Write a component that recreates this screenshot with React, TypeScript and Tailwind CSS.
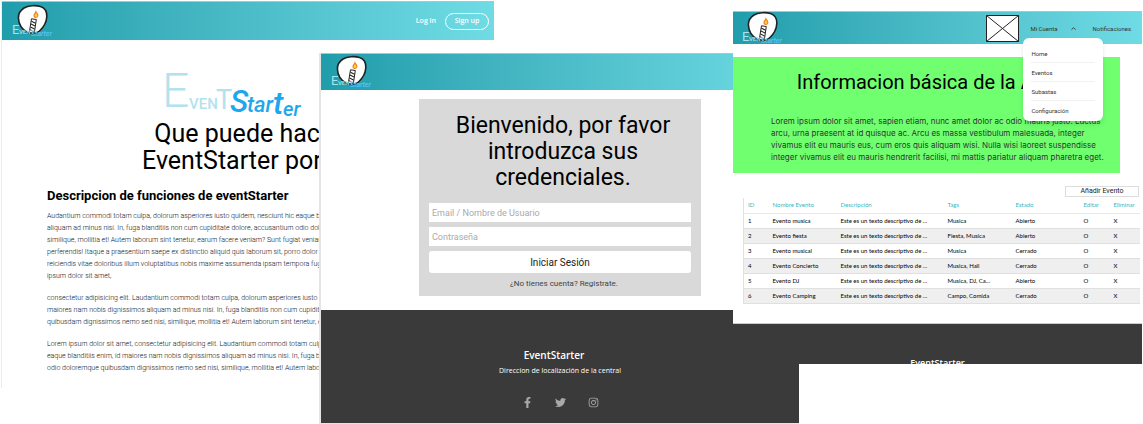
import { FaFacebookF, FaInstagram, FaTwitter } from "react-icons/fa";
import { LuChevronUp } from "react-icons/lu";

const BAR = "border-t border-[#8fd3da] bg-linear-to-r from-[#1f9dab] to-[#6fdce5]";

function Wordmark({ className, light, strong }: { className: string; light: string; strong: string }) {
  return (
    <svg viewBox="0 0 146 54" className={className} role="img" aria-label="EventStarter" fontFamily="Roboto, sans-serif">
      <g fill={light}>
        <text x="1" y="41" fontSize="48" fontWeight="300">E</text>
        <text x="28" y="43" fontSize="15" fontWeight="500">VEN</text>
        <text x="55" y="43" fontSize="27" fontWeight="400">T</text>
      </g>
      <g fill={strong} fontStyle="italic" fontWeight="500">
        <text x="69" y="46" fontSize="31">S</text>
        <text x="86" y="46" fontSize="22">tar</text>
        <text x="112" y="48" fontSize="32">t</text>
        <text x="122" y="50" fontSize="20">er</text>
      </g>
    </svg>
  );
}

function Logo() {
  return (
    <svg viewBox="0 0 42 36" className="h-9 w-[42px] shrink-0" role="img" aria-label="EventStarter">
      <path
        d="M12 5C16 2.300 24 2 28.500 3.500c4.500 1.500 6.500 5.500 6.300 10-.2 6-3.500 11-7.300 14.500-3 2.800-8.500 3.200-12.500 1-4.800-2.600-8.300-8-8.600-14C6.200 11 8.500 7.300 12 5z"
        fill="#fff"
        stroke="#1d2326"
        strokeWidth="1.600"
      />
      <path d="M19.500 15.800l4.800.7-2 13.500-5-.7z" fill="#fff" stroke="#222" strokeWidth="1" />
      <path d="M19.500 18.200l4 2M19 21l4 2M18.500 24l4 2M18 26.800l4 2" stroke="#222" strokeWidth="1.100" />
      <path d="M23.800 7.300c.4 2 2.700 3 2.600 5.200-.1 1.600-1.200 2.500-2.600 2.500-1.600 0-2.500-1.200-2.300-2.800.2-1.700 2-2.500 2.300-4.900z" fill="#f47a1e" />
      <path d="M24 9.800c.3 1 1.600 1.800 1.300 3.200-.3 1.200-2.700 1.200-2.700-.2 0-1.100 1.200-1.800 1.400-3z" fill="#ffd43b" />
      <g fontFamily="Roboto, sans-serif">
        <text x="0" y="31" fontSize="13" fill="#a5e3ee">E</text>
        <text x="7" y="31" fontSize="6" fontWeight="500" fill="#a5e3ee">VENT</text>
        <text x="19" y="33" fontSize="7" fontStyle="italic" fontWeight="500" fill="#5cc4fa">Starter</text>
      </g>
    </svg>
  );
}

const paragraphs: string[][] = [
  [
    "Audantium commodi totam culpa, dolorum asperiores iusto quidem, nesciunt hic eaque blanditiis enim,",
    "aliquam ad minus nisi. In, fuga blanditiis non cum cupiditate dolore, accusantium odio doloremque",
    "similique, mollitia et! Autem laborum sint tenetur, earum facere veniam? Sunt fugiat veniam",
    "perferendis! Itaque a praesentium saepe ex distinctio aliquid quis laborum sit, porro dolor odio",
    "reiciendis vitae doloribus illum voluptatibus nobis maxime assumenda ipsam tempora fugiat",
    "ipsum dolor sit amet,",
  ],
  [
    "consectetur adipisicing elit. Laudantium commodi totam culpa, dolorum asperiores iusto quidem,",
    "maiores nam nobis dignissimos aliquam ad minus nisi. In, fuga blanditiis non cum cupiditate",
    "quibusdam dignissimos nemo sed nisi, similique, mollitia et! Autem laborum sint tenetur, earum",
  ],
  [
    "Lorem ipsum dolor sit amet, consectetur adipisicing elit. Laudantium commodi totam culpa,",
    "eaque blanditiis enim, id maiores nam nobis dignissimos aliquam ad minus nisi. In, fuga blanditiis",
    "odio doloremque quibusdam dignissimos nemo sed nisi, similique, mollitia et! Autem laborum",
  ],
];

function AboutScreen() {
  return (
    <section className="col-start-1 col-end-3 row-start-1 mt-px min-w-0 self-start overflow-hidden border-l border-[#ececec] bg-white pb-[14px]">
      <header className={`${BAR} flex h-[39px] items-center pl-[10px] pr-[5px]`}>
        <Logo />
        <nav className="ml-auto flex items-center gap-[9px] font-['Open_Sans',sans-serif] text-[7px] font-semibold text-white">
          <a href="#login">Log in</a>
          <a href="#signup" className="flex h-[17px] w-11 items-center justify-center rounded-full border border-white">Sign up</a>
        </nav>
      </header>
      <div className="flex justify-center pr-7 pt-[26px]">
        <Wordmark className="h-[54px] w-[146px]" light="#b3e2ee" strong="#1ea7ec" />
      </div>
      <h1 className="text-center text-[25px] leading-[27px] text-black">
        Que puede hacer
        <br />
        EventStarter por ti?
      </h1>
      <h2 className="ml-[45px] mt-3 text-[13px] font-bold leading-[20px] text-black">Descripcion de funciones de eventStarter</h2>
      <div className="ml-[45px] mt-1 flex flex-col gap-[10px] whitespace-nowrap text-[7px] font-light leading-[12px] text-[#111]">
        {paragraphs.map((lines, i) => (
          <p key={i}>
            {lines.map((line) => (
              <span key={line} className="block">{line}</span>
            ))}
          </p>
        ))}
      </div>
    </section>
  );
}

function LoginScreen() {
  return (
    <section className="col-start-2 col-end-5 row-start-1 mt-[53px] min-w-0 self-start border-b border-l-2 border-[#e4e4e4] bg-white">
      <header className={`${BAR} flex h-[37px] items-center pl-[10px]`}>
        <Logo />
      </header>
      <form className="ml-[98px] mr-[98px] mt-[9px] h-[197px] bg-[#d9d9d9] px-[10px] pt-[14px]" onSubmit={(e) => e.preventDefault()}>
        <h1 className="pl-1.5 text-center text-[23px] leading-[26px] text-black">
          Bienvenido, por favor
          <br />
          introduzca sus
          <br />
          credenciales.
        </h1>
        <input
          aria-label="Email / Nombre de Usuario"
          placeholder="Email / Nombre de Usuario"
          className="mt-3 block h-[19px] w-full bg-white px-[3px] text-[9px] placeholder:text-[#aaa]"
        />
        <input
          type="password"
          aria-label="Contraseña"
          placeholder="Contraseña"
          className="mt-[5px] block h-[19px] w-full bg-white px-[3px] text-[9px] placeholder:text-[#aaa]"
        />
        <button className="mt-[5px] block h-[22px] w-full rounded-[3px] bg-white text-[10px] text-[#222]">Iniciar Sesión</button>
        <p className="mt-[5px] pl-2 text-center text-[8px] leading-[12px] text-[#444]">
          ¿No tienes cuenta? <a href="#registro">Registrate.</a>
        </p>
      </form>
      <footer className="mt-[14px] flex h-[113px] flex-col items-center bg-[#393a39] pt-[38px] font-['Open_Sans',sans-serif] text-white">
        <div className="pr-3 text-[10px] font-semibold leading-[14px]">EventStarter</div>
        <p className="mt-1 text-[7px] leading-[10px]">Direccion de localización de la central</p>
        <div className="mt-[21px] flex gap-[22px] text-[11px] text-[#a9a9a9]">
          <a href="#facebook" aria-label="Facebook"><FaFacebookF /></a>
          <a href="#twitter" aria-label="Twitter"><FaTwitter /></a>
          <a href="#instagram" aria-label="Instagram"><FaInstagram /></a>
        </div>
      </footer>
    </section>
  );
}

const events = [
  ["1", "Evento musica", "Musica", "Abierto"],
  ["2", "Evento fiesta", "Fiesta, Musica", "Abierto"],
  ["3", "Evento musical", "Musica", "Cerrado"],
  ["4", "Evento Concierto", "Musica, Hall", "Cerrado"],
  ["5", "Evento DJ", "Musica, DJ, Ca...", "Abierto"],
  ["6", "Evento Camping", "Campo, Comida", "Cerrado"],
];

function EventsScreen() {
  return (
    <section className="col-start-4 col-end-6 row-start-1 mt-[11px] h-[353px] min-w-0 self-start overflow-hidden bg-white">
      <header className={`${BAR} flex h-[33px] items-center pl-[9px] pr-[11px]`}>
        <Logo />
        <svg viewBox="0 0 33 27" className="ml-auto h-[27px] w-[33px]" aria-hidden="true">
          <path d="M.5.500h32v26H.5zM.5.500l32 26M32.500.500l-32 26" fill="#fff" stroke="#222" strokeWidth="1" />
        </svg>
        <nav className="ml-[11px] flex items-center gap-4 text-[6px] text-[#333]">
          <div className="relative">
            <button className="flex h-4 items-center gap-3">
              Mi Cuenta <LuChevronUp className="size-[7px] stroke-[3]" />
            </button>
            <ul className="absolute -left-[7px] top-[18px] w-20 rounded-md bg-white px-2 pb-0.5 pt-[6px] shadow-md">
              {["Home", "Eventos", "Subastas", "Configuración"].map((item) => (
                <li key={item} className="border-b border-[#f1f1f1] last:border-0">
                  <a href="#menu" className="flex h-[18px] items-center">{item}</a>
                </li>
              ))}
            </ul>
          </div>
          <a href="#notificaciones">Notificaciones</a>
        </nav>
      </header>
      <div className="mr-[22px] mt-[13px] h-[116px] bg-[#6fff6f] pt-3">
        <h1 className="text-center text-[20px] leading-[26px] text-black">Informacion básica de la App</h1>
        <p className="ml-[38px] mt-5 whitespace-nowrap font-[Inter,sans-serif] text-[8px] leading-[12px] text-[#333]">
          Lorem ipsum dolor sit amet, sapien etiam, nunc amet dolor ac odio mauris justo. Luctus
          <br />
          arcu, urna praesent at id quisque ac. Arcu es massa vestibulum malesuada, integer
          <br />
          vivamus elit eu mauris eus, cum eros quis aliquam wisi. Nulla wisi laoreet suspendisse
          <br />
          integer vivamus elit eu mauris hendrerit facilisi, mi mattis pariatur aliquam pharetra eget.
        </p>
      </div>
      <div className="ml-[10px] mr-[3px] mt-[13px]">
        <button className="ml-auto block h-[11px] w-[74px] border border-[#ddd] bg-white text-[7px] leading-[9px] text-[#222]">Añadir Evento</button>
        <table className="mt-px w-full table-fixed border-collapse border-l border-[#e0e0e0] text-left font-[Lato,sans-serif] text-[6px] leading-[8px] text-black">
          <thead>
            <tr className="h-[15px] border-b border-[#e8e8e8] text-[#35b8c4]">
              <th className="w-[25px] pl-1 font-normal">ID</th>
              <th className="w-[68px] pl-1 font-normal">Nombre Evento</th>
              <th className="w-[107px] pl-1 font-normal">Descripción</th>
              <th className="w-[68px] pl-1 font-normal">Tags</th>
              <th className="w-[68px] pl-1 font-normal">Estado</th>
              <th className="w-[30px] pl-1 font-normal">Editar</th>
              <th className="w-[30px] pl-1 font-normal">Eliminar</th>
            </tr>
          </thead>
          <tbody>
            {events.map(([id, name, tags, state]) => (
              <tr key={id} className="h-[15px] border-b border-[#e0e0e0] even:bg-[#efefef]">
                <td className="pl-1">{id}</td>
                <td className="pl-1">{name}</td>
                <td className="pl-1">Este es un texto descriptivo de ...</td>
                <td className="pl-1">{tags}</td>
                <td className="pl-1">{state}</td>
                <td className="pl-1"><button aria-label="Editar">O</button></td>
                <td className="pl-1"><button aria-label="Eliminar">X</button></td>
              </tr>
            ))}
          </tbody>
        </table>
      </div>
      <footer className="mt-[19px] h-20 border-t border-[#ccc] bg-[#393a39] pt-[33px] text-center font-['Open_Sans',sans-serif] text-[9px] font-semibold leading-[12px] text-white">
        EventStarter
      </footer>
    </section>
  );
}

export default function App() {
  return (
    <main className="grid min-h-screen grid-cols-[318fr_175fr_239fr_66fr_343fr] bg-white px-px font-[Roboto,sans-serif]">
      <AboutScreen />
      <LoginScreen />
      <EventsScreen />
    </main>
  );
}
